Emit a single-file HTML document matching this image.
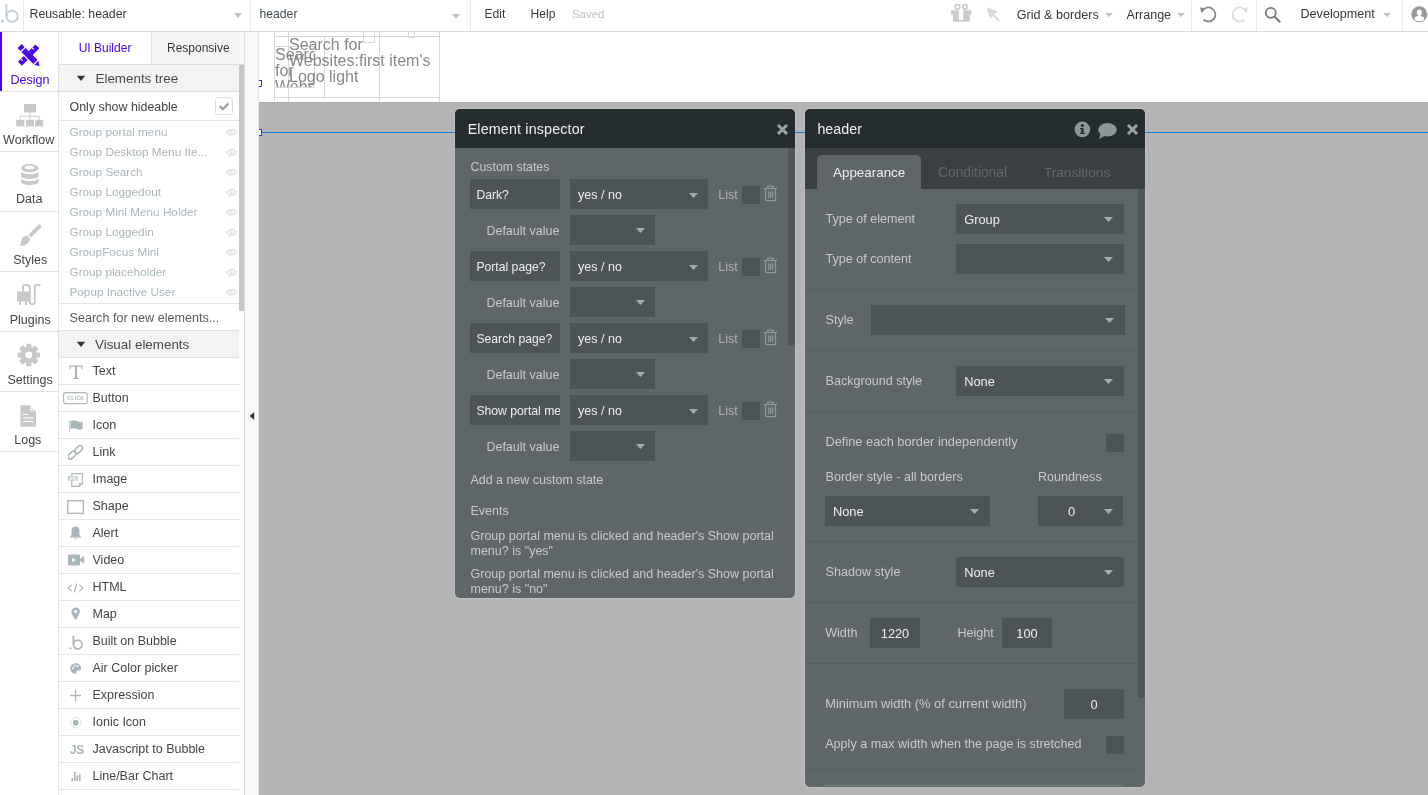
<!DOCTYPE html><html><head><meta charset="utf-8"><style>
html,body{margin:0;padding:0;} body{width:1428px;height:795px;overflow:hidden;position:relative;background:#fff;font-family:"Liberation Sans", sans-serif;}
.t{position:absolute;white-space:nowrap;line-height:20px;} body{-webkit-font-smoothing:antialiased;} #root{position:absolute;left:0;top:0;width:1428px;height:795px;overflow:hidden;will-change:transform;}
.r{position:absolute;display:block;}
</style></head><body><div id="root">
<div class="r" style="left:259px;top:32px;width:1169px;height:763px;background:#b4b4b4;"></div>
<div class="r" style="left:259px;top:32px;width:1169px;height:70px;background:#ffffff;"></div>
<div class="r" style="left:274px;top:32px;width:1px;height:70px;background:#d9d9d9;"></div>
<div class="r" style="left:288px;top:32px;width:1px;height:70px;background:#d9d9d9;"></div>
<div class="r" style="left:324px;top:36px;width:1px;height:61px;background:#d9d9d9;"></div>
<div class="r" style="left:379px;top:32px;width:1px;height:70px;background:#d9d9d9;"></div>
<div class="r" style="left:439px;top:32px;width:1px;height:70px;background:#d9d9d9;"></div>
<div class="r" style="left:259px;top:102px;width:1169px;height:1px;background:#adadad;"></div>
<div class="r" style="left:274px;top:36px;width:166px;height:1px;background:#d9d9d9;"></div>
<div class="r" style="left:274px;top:97px;width:166px;height:1px;background:#d9d9d9;"></div>
<div class="r" style="left:274px;top:46px;width:40px;height:1px;background:#d9d9d9;"></div>
<div class="r" style="left:274px;top:87px;width:40px;height:1px;background:#d9d9d9;"></div>
<div class="r" style="left:314px;top:46px;width:1px;height:41px;background:#d9d9d9;"></div>
<div class="r" style="left:363px;top:32px;width:1px;height:10px;background:#d9d9d9;"></div>
<div class="r" style="left:374px;top:32px;width:1px;height:10px;background:#d9d9d9;"></div>
<div class="r" style="left:363px;top:42px;width:12px;height:1px;background:#d9d9d9;"></div>
<div class="r" style="left:408px;top:32px;width:1px;height:6px;background:#d9d9d9;"></div>
<div class="r" style="left:414px;top:32px;width:1px;height:6px;background:#d9d9d9;"></div>
<div class="r" style="left:408px;top:37px;width:7px;height:1px;background:#d9d9d9;"></div>
<div class="r" style="left:274px;top:46px;width:40px;height:41px;overflow:hidden"><div style="position:absolute;left:1px;top:1px;font-size:16px;line-height:16px;color:#888;width:60px;white-space:normal">Search for Websites:first</div></div>
<div class="t" style="left:289px;top:37px;font-size:16px;line-height:16px;color:#888;white-space:normal;width:150px">Search for<br>Websites:first item's<br>Logo light</div>
<div class="r" style="left:259px;top:132px;width:1169px;height:1px;background:#0a7fe2;"></div>
<div class="r" style="left:259px;top:80px;width:3px;height:7px;background:#fff;border:1px solid #2030ff;border-left:none;box-sizing:border-box"></div>
<div class="r" style="left:259px;top:129px;width:3px;height:7px;background:#fff;border:1px solid #2030ff;border-left:none;box-sizing:border-box"></div>
<div class="r" style="left:0px;top:0px;width:1428px;height:31px;background:#fff;"></div>
<div class="r" style="left:0px;top:31px;width:1428px;height:1px;background:#dadada;"></div>
<svg class="r" style="left:0px;top:0px;" width="22" height="26" viewBox="0 0 22 26"><circle cx="2.6" cy="21.2" r="1.6" fill="#c3ced5"/><path d="M6.4 4.2V16.3" stroke="#c3ced5" stroke-width="1.9" fill="none"/><circle cx="12.1" cy="16.3" r="5.6" stroke="#c3ced5" stroke-width="1.9" fill="none"/></svg>
<div class="r" style="left:23px;top:0px;width:1px;height:31px;background:#e4ebee;"></div>
<div class="t" style="left:29.5px;top:4px;font-size:12.3px;color:#383838;">Reusable: header</div>
<svg class="r" style="left:234px;top:13px;" width="8" height="5" viewBox="0 0 8 5"><path d="M0 0H8L4.0 5Z" fill="#b6c4cb"/></svg>
<div class="r" style="left:250px;top:0px;width:1px;height:31px;background:#e4ebee;"></div>
<div class="t" style="left:259.5px;top:4px;font-size:12.2px;color:#3d4a50;">header</div>
<svg class="r" style="left:452px;top:14px;" width="8" height="5" viewBox="0 0 8 5"><path d="M0 0H8L4.0 5Z" fill="#b6c4cb"/></svg>
<div class="r" style="left:470px;top:0px;width:1px;height:31px;background:#e4ebee;"></div>
<div class="t" style="left:484.5px;top:4px;font-size:12.1px;color:#383838;">Edit</div>
<div class="t" style="left:530.5px;top:4px;font-size:12.1px;color:#383838;">Help</div>
<div class="t" style="left:572px;top:4px;font-size:11.4px;color:#bdbdbd;">Saved</div>
<svg class="r" style="left:950px;top:3px;" width="23" height="20" viewBox="0 0 23 20"><g fill="#c9c9c9"><rect x="1" y="7.3" width="20.4" height="4.4"/><rect x="3" y="11.7" width="16.7" height="7"/></g><g fill="none" stroke="#c9c9c9" stroke-width="1.6"><circle cx="7.5" cy="3.8" r="2.3"/><circle cx="14.8" cy="3.8" r="2.3"/></g><rect x="8.9" y="6.6" width="4.4" height="10.5" fill="#fff"/></svg>
<svg class="r" style="left:985px;top:6px;" width="17" height="17" viewBox="0 0 17 17"><path d="M1.6 1.3L12.8 5.5 9.4 8.4 14.9 13.9 13.4 15.4 7.9 9.9 5 13Z" fill="#dadada"/></svg>
<div class="t" style="left:1016.8px;top:5px;font-size:12.6px;color:#383838;">Grid &amp; borders</div>
<svg class="r" style="left:1105px;top:13px;" width="8" height="4" viewBox="0 0 8 4"><path d="M0 0H8L4.0 4Z" fill="#b6c4cb"/></svg>
<div class="t" style="left:1126.6px;top:5px;font-size:12.5px;color:#383838;">Arrange</div>
<svg class="r" style="left:1177px;top:13px;" width="8" height="4" viewBox="0 0 8 4"><path d="M0 0H8L4.0 4Z" fill="#b6c4cb"/></svg>
<div class="r" style="left:1191px;top:0px;width:1px;height:31px;background:#e4ebee;"></div>
<svg class="r" style="left:1199px;top:5px;" width="18" height="18" viewBox="0 0 18 18"><path d="M3.2 6.2A7 7 0 1 1 4.5 14.5" fill="none" stroke="#8a8a8a" stroke-width="1.8"/><path d="M1 2.2L6.4 3.6 2.5 8.2Z" fill="#8a8a8a"/></svg>
<svg class="r" style="left:1231px;top:5px;" width="18" height="18" viewBox="0 0 18 18"><path d="M14.8 6.2A7 7 0 1 0 13.5 14.5" fill="none" stroke="#dedede" stroke-width="1.8"/><path d="M17 2.2L11.6 3.6 15.5 8.2Z" fill="#dedede"/></svg>
<div class="r" style="left:1256px;top:0px;width:1px;height:31px;background:#e4ebee;"></div>
<svg class="r" style="left:1264px;top:6px;" width="18" height="18" viewBox="0 0 18 18"><circle cx="6.8" cy="6.8" r="5" fill="none" stroke="#7a7a7a" stroke-width="1.8"/><path d="M10.5 10.5L16.2 16.2" stroke="#7a7a7a" stroke-width="2"/></svg>
<div class="t" style="left:1300.5px;top:4px;font-size:12.6px;color:#383838;">Development</div>
<svg class="r" style="left:1382.5px;top:13px;" width="8" height="4" viewBox="0 0 8 4"><path d="M0 0H8L4.0 4Z" fill="#b6c4cb"/></svg>
<div class="r" style="left:1402px;top:0px;width:1px;height:31px;background:#e4ebee;"></div>
<svg class="r" style="left:1410px;top:5px;" width="18" height="19" viewBox="0 0 18 19"><circle cx="9.3" cy="9.3" r="8" fill="#999"/><ellipse cx="9.3" cy="7.4" rx="2.5" ry="2.9" fill="#fff"/><rect x="8.1" y="9" width="2.4" height="3.5" fill="#fff"/><ellipse cx="9.3" cy="13.6" rx="4.8" ry="2.6" fill="#fff"/></svg>
<div class="r" style="left:0px;top:32px;width:58px;height:763px;background:#fff;"></div>
<div class="r" style="left:58px;top:32px;width:1px;height:763px;background:#e2e2e2;"></div>
<div class="r" style="left:0px;top:91px;width:58px;height:1px;background:#e2e2e2;"></div>
<div class="r" style="left:0px;top:151px;width:58px;height:1px;background:#e2e2e2;"></div>
<div class="r" style="left:0px;top:211px;width:58px;height:1px;background:#e2e2e2;"></div>
<div class="r" style="left:0px;top:271px;width:58px;height:1px;background:#e2e2e2;"></div>
<div class="r" style="left:0px;top:331px;width:58px;height:1px;background:#e2e2e2;"></div>
<div class="r" style="left:0px;top:391px;width:58px;height:1px;background:#e2e2e2;"></div>
<div class="r" style="left:0px;top:451px;width:58px;height:1px;background:#e2e2e2;"></div>
<div class="r" style="left:0px;top:32px;width:2px;height:59px;background:#4a0ae6;"></div>
<svg class="r" style="left:16px;top:42px;" width="26" height="26" viewBox="0 0 26 26"><g transform="translate(12.6 13) rotate(45)" fill="#4a0ae6"><rect x="-2.7" y="-12.3" width="5.6" height="10" rx="0.7"/><rect x="-2.7" y="4.1" width="5.6" height="8.3" rx="0.7"/><rect x="-12.7" y="-2.8" width="4.3" height="5.8" rx="0.8"/><rect x="-7.3" y="-2.8" width="17" height="5.8" rx="0.4"/><path d="M11.1 -2.8L15.5 0.1 11.1 3Z"/><g stroke="#fff" stroke-width="1.1"><path d="M-2.8 -7.6H-0.3"/><path d="M-2.8 8.2H-0.3"/></g></g></svg>
<div class="t" style="left:-10px;width:80px;text-align:center;top:70px;font-size:12.6px;color:#4a0ae6">Design</div>
<svg class="r" style="left:16px;top:104px;" width="28" height="23" viewBox="0 0 28 23"><g fill="#c8c8c8"><rect x="8" y="0" width="12" height="8.5"/><rect x="0.3" y="15.8" width="8" height="6.5"/><rect x="10" y="15.8" width="8" height="6.5"/><rect x="19.2" y="15.8" width="8" height="6.5"/></g><path d="M14 8.5V15.8M4.3 15.8V12.2H23.2V15.8" stroke="#c8c8c8" stroke-width="0.9" fill="none"/></svg>
<div class="t" style="left:-11.3px;width:80px;text-align:center;top:130px;font-size:12.5px;color:#444">Workflow</div>
<svg class="r" style="left:20px;top:163px;" width="20" height="23" viewBox="0 0 20 23"><g fill="#c8c8c8"><ellipse cx="9.8" cy="5.2" rx="8.7" ry="4.1"/><path d="M1.1 8.6C3 12 16.6 12 18.5 8.6V13.5C16.6 16.8 3 16.8 1.1 13.5Z"/><path d="M1.1 15.6C3 19 16.6 19 18.5 15.6V19.5C16.6 22.8 3 22.8 1.1 19.5Z"/></g><ellipse cx="9.8" cy="4.4" rx="5" ry="1.9" fill="#fff"/></svg>
<div class="t" style="left:-10.8px;width:80px;text-align:center;top:189px;font-size:12.5px;color:#444">Data</div>
<svg class="r" style="left:18px;top:223px;" width="25" height="24" viewBox="0 0 25 24"><path d="M22.8 2.3C23.8 3.2 23.5 4 22.6 5L13 14.5 10.3 11.8 19.8 2.2C20.8 1.3 21.8 1.3 22.8 2.3Z" fill="#c8c8c8"/><path d="M9.3 12.8L12 15.5C11.5 19.5 8.5 22.8 1.5 22.8 3.5 21 2.5 18.5 4 15.5 5.2 13.3 7.2 12.6 9.3 12.8Z" fill="#c8c8c8"/></svg>
<div class="t" style="left:-9.8px;width:80px;text-align:center;top:250px;font-size:12.5px;color:#444">Styles</div>
<svg class="r" style="left:16px;top:283px;" width="26" height="23" viewBox="0 0 26 23"><g fill="#c8c8c8"><rect x="1" y="8.5" width="12" height="10" rx="0.5"/><rect x="3" y="18.5" width="2" height="3.5"/><rect x="9" y="18.5" width="2" height="3.5"/><path d="M6 8.5V4C6 1.5 8 1 9 1H11V3H9C8.3 3 8 3.4 8 4V8.5Z"/></g><path d="M11 2C12.8 2 13.8 3 13.8 5V18.5C13.8 20.3 15 21.3 16.3 21.3 17.6 21.3 18.8 20.3 18.8 18.5V4C18.8 2.5 19.8 2 21 2H24.5" fill="none" stroke="#c8c8c8" stroke-width="1.9"/></svg>
<div class="t" style="left:-9.8px;width:80px;text-align:center;top:310px;font-size:12.5px;color:#444">Plugins</div>
<svg class="r" style="left:17px;top:343px;" width="24" height="24" viewBox="0 0 24 24"><g fill="#c8c8c8" transform="translate(11.8 12)"><circle r="8.2"/><rect x="-2.6" y="-11.2" width="5.2" height="5" rx="1" transform="rotate(0)"/><rect x="-2.6" y="-11.2" width="5.2" height="5" rx="1" transform="rotate(45)"/><rect x="-2.6" y="-11.2" width="5.2" height="5" rx="1" transform="rotate(90)"/><rect x="-2.6" y="-11.2" width="5.2" height="5" rx="1" transform="rotate(135)"/><rect x="-2.6" y="-11.2" width="5.2" height="5" rx="1" transform="rotate(180)"/><rect x="-2.6" y="-11.2" width="5.2" height="5" rx="1" transform="rotate(225)"/><rect x="-2.6" y="-11.2" width="5.2" height="5" rx="1" transform="rotate(270)"/><rect x="-2.6" y="-11.2" width="5.2" height="5" rx="1" transform="rotate(315)"/></g><circle cx="11.8" cy="12" r="3.4" fill="#fff"/></svg>
<div class="t" style="left:-9.899999999999999px;width:80px;text-align:center;top:370px;font-size:12.5px;color:#444">Settings</div>
<svg class="r" style="left:19px;top:404px;" width="18" height="24" viewBox="0 0 18 24"><path d="M1.5 1.2H11L17 7.2V21.5C17 22.3 16.5 22.8 15.7 22.8H2.8C2 22.8 1.5 22.3 1.5 21.5Z" fill="#c8c8c8"/><path d="M11 1.2V7.2H17" fill="#fff" opacity="0.6"/><g stroke="#fff" stroke-width="1.1"><path d="M4 10.5H9"/><path d="M4 14H14.5"/><path d="M4 17.5H14.5"/></g></svg>
<div class="t" style="left:-12.2px;width:80px;text-align:center;top:430px;font-size:12.5px;color:#444">Logs</div>
<div class="r" style="left:59px;top:32px;width:185px;height:763px;background:#fff;"></div>
<div class="r" style="left:244px;top:32px;width:1px;height:763px;background:#dedede;"></div>
<div class="r" style="left:245px;top:32px;width:13px;height:763px;background:#f8f8f8;"></div>
<div class="r" style="left:258px;top:32px;width:1px;height:763px;background:#e4e4e4;"></div>
<svg class="r" style="left:249px;top:411px;" width="6" height="10" viewBox="0 0 6 10"><path d="M5.2 1V9L0.6 5Z" fill="#333"/></svg>
<div class="r" style="left:151px;top:32px;width:93px;height:32px;background:#f5f5f5;"></div>
<div class="r" style="left:151px;top:32px;width:1px;height:32px;background:#e2e2e2;"></div>
<div class="r" style="left:59px;top:64px;width:185px;height:1px;background:#dcdcdc;"></div>
<div class="t" style="left:78.7px;top:38px;font-size:12px;color:#4a0ae6;">UI Builder</div>
<div class="t" style="left:167px;top:38px;font-size:12px;color:#383838;">Responsive</div>
<div class="r" style="left:59px;top:65px;width:180px;height:26px;background:#f3f3f3;"></div>
<div class="r" style="left:59px;top:91px;width:180px;height:1px;background:#dedede;"></div>
<svg class="r" style="left:76px;top:75px;" width="10" height="7" viewBox="0 0 10 7"><path d="M0.8 0.8H9.2L5 6Z" fill="#333"/></svg>
<div class="t" style="left:95.5px;top:69px;font-size:13.4px;color:#484848;">Elements tree</div>
<div class="r" style="left:239px;top:65px;width:5px;height:246px;background:#c6c6c6;"></div>
<div class="t" style="left:69.6px;top:97px;font-size:12.4px;color:#444;">Only show hideable</div>
<div class="r" style="left:215px;top:97px;width:18px;height:18px;box-sizing:border-box;border:1px solid #dedede;border-radius:3px;background:#fff"></div>
<svg class="r" style="left:218px;top:101px;" width="13" height="11" viewBox="0 0 13 11"><path d="M1.7 5.2L4.8 8.2 10.4 2.5" fill="none" stroke="#98a4a8" stroke-width="2.3"/></svg>
<div class="r" style="left:59px;top:120px;width:180px;height:1px;background:#e6e6e6;"></div>
<div class="t" style="left:69.5px;top:122px;font-size:11.75px;color:#a9b6bb;">Group portal menu</div>
<svg class="r" style="left:226px;top:127px;" width="11" height="11" viewBox="0 0 11 11"><path d="M0.4 5.4Q5.5 -0.6 10.6 5.4Q5.5 11.4 0.4 5.4Z" fill="none" stroke="#d6dbdd" stroke-width="1.1"/><circle cx="5.5" cy="5.3" r="1.9" fill="#dfe3e4"/><path d="M3.6 9.4L7.6 1.2" stroke="#fff" stroke-width="1.6"/><path d="M3.3 9.6L7.3 1.3" stroke="#d6dbdd" stroke-width="1"/></svg>
<div class="t" style="left:69.5px;top:142px;font-size:11.75px;color:#a9b6bb;">Group Desktop Menu Ite...</div>
<svg class="r" style="left:226px;top:147px;" width="11" height="11" viewBox="0 0 11 11"><path d="M0.4 5.4Q5.5 -0.6 10.6 5.4Q5.5 11.4 0.4 5.4Z" fill="none" stroke="#d6dbdd" stroke-width="1.1"/><circle cx="5.5" cy="5.3" r="1.9" fill="#dfe3e4"/><path d="M3.6 9.4L7.6 1.2" stroke="#fff" stroke-width="1.6"/><path d="M3.3 9.6L7.3 1.3" stroke="#d6dbdd" stroke-width="1"/></svg>
<div class="t" style="left:69.5px;top:162px;font-size:11.75px;color:#a9b6bb;">Group Search</div>
<svg class="r" style="left:226px;top:167px;" width="11" height="11" viewBox="0 0 11 11"><path d="M0.4 5.4Q5.5 -0.6 10.6 5.4Q5.5 11.4 0.4 5.4Z" fill="none" stroke="#d6dbdd" stroke-width="1.1"/><circle cx="5.5" cy="5.3" r="1.9" fill="#dfe3e4"/><path d="M3.6 9.4L7.6 1.2" stroke="#fff" stroke-width="1.6"/><path d="M3.3 9.6L7.3 1.3" stroke="#d6dbdd" stroke-width="1"/></svg>
<div class="t" style="left:69.5px;top:182px;font-size:11.75px;color:#a9b6bb;">Group Loggedout</div>
<svg class="r" style="left:226px;top:187px;" width="11" height="11" viewBox="0 0 11 11"><path d="M0.4 5.4Q5.5 -0.6 10.6 5.4Q5.5 11.4 0.4 5.4Z" fill="none" stroke="#d6dbdd" stroke-width="1.1"/><circle cx="5.5" cy="5.3" r="1.9" fill="#dfe3e4"/><path d="M3.6 9.4L7.6 1.2" stroke="#fff" stroke-width="1.6"/><path d="M3.3 9.6L7.3 1.3" stroke="#d6dbdd" stroke-width="1"/></svg>
<div class="t" style="left:69.5px;top:202px;font-size:11.75px;color:#a9b6bb;">Group Mini Menu Holder</div>
<svg class="r" style="left:226px;top:207px;" width="11" height="11" viewBox="0 0 11 11"><path d="M0.4 5.4Q5.5 -0.6 10.6 5.4Q5.5 11.4 0.4 5.4Z" fill="none" stroke="#d6dbdd" stroke-width="1.1"/><circle cx="5.5" cy="5.3" r="1.9" fill="#dfe3e4"/><path d="M3.6 9.4L7.6 1.2" stroke="#fff" stroke-width="1.6"/><path d="M3.3 9.6L7.3 1.3" stroke="#d6dbdd" stroke-width="1"/></svg>
<div class="t" style="left:69.5px;top:222px;font-size:11.75px;color:#a9b6bb;">Group Loggedin</div>
<svg class="r" style="left:226px;top:227px;" width="11" height="11" viewBox="0 0 11 11"><path d="M0.4 5.4Q5.5 -0.6 10.6 5.4Q5.5 11.4 0.4 5.4Z" fill="none" stroke="#d6dbdd" stroke-width="1.1"/><circle cx="5.5" cy="5.3" r="1.9" fill="#dfe3e4"/><path d="M3.6 9.4L7.6 1.2" stroke="#fff" stroke-width="1.6"/><path d="M3.3 9.6L7.3 1.3" stroke="#d6dbdd" stroke-width="1"/></svg>
<div class="t" style="left:69.5px;top:242px;font-size:11.75px;color:#a9b6bb;">GroupFocus Mini</div>
<svg class="r" style="left:226px;top:247px;" width="11" height="11" viewBox="0 0 11 11"><path d="M0.4 5.4Q5.5 -0.6 10.6 5.4Q5.5 11.4 0.4 5.4Z" fill="none" stroke="#d6dbdd" stroke-width="1.1"/><circle cx="5.5" cy="5.3" r="1.9" fill="#dfe3e4"/><path d="M3.6 9.4L7.6 1.2" stroke="#fff" stroke-width="1.6"/><path d="M3.3 9.6L7.3 1.3" stroke="#d6dbdd" stroke-width="1"/></svg>
<div class="t" style="left:69.5px;top:262px;font-size:11.75px;color:#a9b6bb;">Group placeholder</div>
<svg class="r" style="left:226px;top:267px;" width="11" height="11" viewBox="0 0 11 11"><path d="M0.4 5.4Q5.5 -0.6 10.6 5.4Q5.5 11.4 0.4 5.4Z" fill="none" stroke="#d6dbdd" stroke-width="1.1"/><circle cx="5.5" cy="5.3" r="1.9" fill="#dfe3e4"/><path d="M3.6 9.4L7.6 1.2" stroke="#fff" stroke-width="1.6"/><path d="M3.3 9.6L7.3 1.3" stroke="#d6dbdd" stroke-width="1"/></svg>
<div class="t" style="left:69.5px;top:282px;font-size:11.75px;color:#a9b6bb;">Popup Inactive User</div>
<svg class="r" style="left:226px;top:287px;" width="11" height="11" viewBox="0 0 11 11"><path d="M0.4 5.4Q5.5 -0.6 10.6 5.4Q5.5 11.4 0.4 5.4Z" fill="none" stroke="#d6dbdd" stroke-width="1.1"/><circle cx="5.5" cy="5.3" r="1.9" fill="#dfe3e4"/><path d="M3.6 9.4L7.6 1.2" stroke="#fff" stroke-width="1.6"/><path d="M3.3 9.6L7.3 1.3" stroke="#d6dbdd" stroke-width="1"/></svg>
<div class="r" style="left:59px;top:303px;width:180px;height:1px;background:#e6e6e6;"></div>
<div class="t" style="left:69.5px;top:308px;font-size:12.6px;color:#5a5a5a;">Search for new elements...</div>
<div class="r" style="left:59px;top:330px;width:180px;height:1px;background:#e2e2e2;"></div>
<div class="r" style="left:59px;top:331px;width:180px;height:26px;background:#f3f3f3;"></div>
<svg class="r" style="left:76px;top:341px;" width="10" height="7" viewBox="0 0 10 7"><path d="M0.8 0.8H9.2L5 6Z" fill="#333"/></svg>
<div class="t" style="left:95px;top:335px;font-size:13.4px;color:#484848;">Visual elements</div>
<div class="r" style="left:59px;top:357px;width:180px;height:1px;background:#e2e2e2;"></div>
<div class="t" style="left:92.5px;top:361px;font-size:12.5px;color:#444;">Text</div>
<svg class="r" style="left:69px;top:365px;" width="14" height="15" viewBox="0 0 14 15"><path d="M0.5 0.5H13.5V4.2H12.6L12 1.8H8.1V12.6L9.8 13.1V14H4.2V13.1L5.9 12.6V1.8H2L1.4 4.2H0.5Z" fill="#a9b6ba"/></svg>
<div class="r" style="left:59px;top:384px;width:180px;height:1px;background:#e6e6e6;"></div>
<div class="t" style="left:92.5px;top:388px;font-size:12.5px;color:#444;">Button</div>
<svg class="r" style="left:63px;top:391.5px;" width="26" height="13" viewBox="0 0 26 13"><rect x="0.6" y="0.6" width="23.6" height="11" rx="2.2" fill="none" stroke="#a9b6ba" stroke-width="1.1"/><text x="4.3" y="8.2" font-family="Liberation Sans" font-weight="bold" font-size="5" fill="#a9b6ba" letter-spacing="0.35">CLICK</text></svg>
<div class="r" style="left:59px;top:411px;width:180px;height:1px;background:#e6e6e6;"></div>
<div class="t" style="left:92.5px;top:415px;font-size:12.5px;color:#444;">Icon</div>
<svg class="r" style="left:69px;top:420px;" width="15" height="13" viewBox="0 0 15 13"><rect x="0" y="0" width="1.2" height="12" fill="#c8d0d3"/><path d="M1.5 1.2C4 0 6 0.2 8 1.2S12 2.2 13.5 1.2V9C12 10 10 10 8 9S4 8 1.5 9Z" fill="#a9b6ba"/></svg>
<div class="r" style="left:59px;top:438px;width:180px;height:1px;background:#e6e6e6;"></div>
<div class="t" style="left:92.5px;top:442px;font-size:12.5px;color:#444;">Link</div>
<svg class="r" style="left:68px;top:445px;" width="16" height="16" viewBox="0 0 16 16"><g fill="none" stroke="#a9b6ba" stroke-width="1.5"><rect x="-0.6" y="7.6" width="9.2" height="5" rx="2.5" transform="rotate(-45 4 10.1)"/><rect x="5.9" y="2.1" width="9.2" height="5" rx="2.5" transform="rotate(-45 10.5 4.6)"/></g></svg>
<div class="r" style="left:59px;top:465px;width:180px;height:1px;background:#e6e6e6;"></div>
<div class="t" style="left:92.5px;top:469px;font-size:12.5px;color:#444;">Image</div>
<svg class="r" style="left:68px;top:473px;" width="16" height="15" viewBox="0 0 16 15"><path d="M3.8 0.6H14.4V10.4L11.4 13.4H3.8Z" fill="#fff" stroke="#a9b6ba" stroke-width="1.1"/><path d="M14.4 10.4H11.4V13.4" fill="none" stroke="#a9b6ba" stroke-width="1"/><rect x="0" y="3.2" width="9.6" height="4.4" fill="#c3ccd0"/><text x="0.9" y="6.8" font-family="Liberation Sans" font-weight="bold" font-size="3.6" fill="#fff">JPG</text></svg>
<div class="r" style="left:59px;top:492px;width:180px;height:1px;background:#e6e6e6;"></div>
<div class="t" style="left:92.5px;top:496px;font-size:12.5px;color:#444;">Shape</div>
<svg class="r" style="left:67px;top:500px;" width="18" height="15" viewBox="0 0 18 15"><rect x="0.7" y="0.7" width="15.6" height="12.6" fill="none" stroke="#a9b6ba" stroke-width="1.3"/></svg>
<div class="r" style="left:59px;top:519px;width:180px;height:1px;background:#e6e6e6;"></div>
<div class="t" style="left:92.5px;top:523px;font-size:12.5px;color:#444;">Alert</div>
<svg class="r" style="left:69px;top:526px;" width="13" height="14" viewBox="0 0 13 14"><path d="M6.5 0.5C4 0.5 2.5 2.5 2.5 5V9L0.5 11.5H12.5L10.5 9V5C10.5 2.5 9 0.5 6.5 0.5Z" fill="#a9b6ba"/><path d="M5 12.2H8L6.5 13.6Z" fill="#a9b6ba"/></svg>
<div class="r" style="left:59px;top:546px;width:180px;height:1px;background:#e6e6e6;"></div>
<div class="t" style="left:92.5px;top:550px;font-size:12.5px;color:#444;">Video</div>
<svg class="r" style="left:67.5px;top:554px;" width="17" height="12" viewBox="0 0 17 12"><rect x="0" y="0.5" width="12" height="11" rx="0.8" fill="#a9b6ba"/><path d="M12 5L16.2 2V9.8L12 7Z" fill="#a9b6ba"/><path d="M4.3 3.8L7.6 6 4.3 8.2Z" fill="#fff"/></svg>
<div class="r" style="left:59px;top:573px;width:180px;height:1px;background:#e6e6e6;"></div>
<div class="t" style="left:92.5px;top:577px;font-size:12.5px;color:#444;">HTML</div>
<svg class="r" style="left:67px;top:583px;" width="18" height="10" viewBox="0 0 18 10"><g fill="none" stroke="#a9b6ba" stroke-width="1.1"><path d="M4.8 1.8L1 5 4.8 8.2"/><path d="M12.2 1.8L16 5 12.2 8.2"/><path d="M9.8 0.5L7.2 9.5"/></g></svg>
<div class="r" style="left:59px;top:600px;width:180px;height:1px;background:#e6e6e6;"></div>
<div class="t" style="left:92.5px;top:604px;font-size:12.5px;color:#444;">Map</div>
<svg class="r" style="left:71px;top:607px;" width="10" height="14" viewBox="0 0 10 14"><path d="M4.6 0.5C2.2 0.5 0.4 2.4 0.4 4.6 0.4 7.5 4.6 13.2 4.6 13.2S8.8 7.5 8.8 4.6C8.8 2.4 7 0.5 4.6 0.5Z" fill="#a9b6ba"/><circle cx="4.6" cy="4.5" r="1.6" fill="#fff"/></svg>
<div class="r" style="left:59px;top:627px;width:180px;height:1px;background:#e6e6e6;"></div>
<div class="t" style="left:92.5px;top:631px;font-size:12.5px;color:#444;">Built on Bubble</div>
<svg class="r" style="left:68.5px;top:634.5px;" width="15" height="15" viewBox="0 0 15 15"><circle cx="1.4" cy="13.2" r="1" fill="#a9b6ba"/><path d="M4.4 0.8V9.5" stroke="#a9b6ba" stroke-width="1.7"/><circle cx="8.8" cy="9.5" r="4.3" fill="none" stroke="#a9b6ba" stroke-width="1.7"/></svg>
<div class="r" style="left:59px;top:654px;width:180px;height:1px;background:#e6e6e6;"></div>
<div class="t" style="left:92.5px;top:658px;font-size:12.5px;color:#444;">Air Color picker</div>
<svg class="r" style="left:70px;top:663px;" width="12" height="12" viewBox="0 0 12 12"><path d="M5.8 0.3C2.6 0.3 0.3 2.6 0.3 5.6 0.3 8.7 2.9 10.7 5.5 10.7 6.5 10.7 6.8 10 6.4 9.2 5.9 8.3 6.5 7.5 7.5 7.5H8.9C10.4 7.5 11 6.5 11 5.2 11 2.4 8.7 0.3 5.8 0.3Z" fill="#a9b6ba"/><circle cx="2.9" cy="5.3" r="1" fill="#fff"/><circle cx="4.6" cy="2.8" r="1" fill="#fff"/><circle cx="7.5" cy="2.9" r="1" fill="#fff"/></svg>
<div class="r" style="left:59px;top:681px;width:180px;height:1px;background:#e6e6e6;"></div>
<div class="t" style="left:92.5px;top:685px;font-size:12.5px;color:#444;">Expression</div>
<svg class="r" style="left:70px;top:690px;" width="12" height="12" viewBox="0 0 12 12"><path d="M5.5 0V11M0 5.5H11" stroke="#a9b6ba" stroke-width="1.4"/></svg>
<div class="r" style="left:59px;top:708px;width:180px;height:1px;background:#e6e6e6;"></div>
<div class="t" style="left:92.5px;top:712px;font-size:12.5px;color:#444;">Ionic Icon</div>
<svg class="r" style="left:69.5px;top:717px;" width="12" height="12" viewBox="0 0 12 12"><circle cx="5.7" cy="5.7" r="5.2" fill="none" stroke="#d5dcdf" stroke-width="0.9"/><circle cx="5.7" cy="5.7" r="2.9" fill="#a9b6ba"/></svg>
<div class="r" style="left:59px;top:735px;width:180px;height:1px;background:#e6e6e6;"></div>
<div class="t" style="left:92.5px;top:739px;font-size:12.5px;color:#444;">Javascript to Bubble</div>
<svg class="r" style="left:69.5px;top:744px;" width="18" height="11" viewBox="0 0 18 11"><text x="0" y="9.5" font-family="Liberation Sans" font-weight="bold" font-size="12.6" fill="#a9b6ba" transform="scale(0.95 1)" letter-spacing="-0.3">JS</text></svg>
<div class="r" style="left:59px;top:762px;width:180px;height:1px;background:#e6e6e6;"></div>
<div class="t" style="left:92.5px;top:766px;font-size:12.5px;color:#444;">Line/Bar Chart</div>
<svg class="r" style="left:71px;top:772px;" width="10" height="10" viewBox="0 0 10 10"><g fill="#a9b6ba"><rect x="0.5" y="6" width="1.6" height="3"/><rect x="3" y="0" width="1.6" height="9"/><rect x="5.5" y="3.5" width="1.6" height="5.5"/><rect x="8" y="2.5" width="1.6" height="6.5"/></g></svg>
<div class="r" style="left:59px;top:789px;width:180px;height:1px;background:#e6e6e6;"></div>
<div class="r" style="left:455px;top:109px;width:340px;height:489px;background:#5e6669;border-radius:5px;overflow:hidden;box-shadow:0 0 0 1px rgba(255,255,255,0.10),0 0 3px rgba(255,255,255,0.12)"><div style="position:absolute;left:0;top:0;width:340px;height:39px;background:#262d30"></div></div>
<div class="t" style="left:467.7px;top:119px;font-size:14.3px;color:#f0f0f0;letter-spacing:0.15px">Element inspector</div>
<svg class="r" style="left:776px;top:123px;" width="13" height="13" viewBox="0 0 13 13"><path d="M2 2L11 11M11 2L2 11" stroke="#9aa4a8" stroke-width="3"/></svg>
<div class="r" style="left:788px;top:148px;width:7px;height:197px;background:#50575a;"></div>
<div class="t" style="left:470.5px;top:157px;font-size:12.35px;color:#c6cacc;">Custom states</div>
<div class="r" style="left:470px;top:179px;width:90px;height:30px;background:#4d5457;"></div>
<div class="r" style="left:470px;top:179px;width:90px;height:30px;overflow:hidden"><div class="t" style="left:6.4px;top:6px;font-size:12.2px;color:#eeeeee">Dark?</div></div>
<div class="r" style="left:570px;top:179px;width:138px;height:30px;background:#4d5457;"></div>
<div class="t" style="left:578px;top:185px;font-size:12.6px;color:#eeeeee;">yes / no</div>
<svg class="r" style="left:688.5px;top:192.5px;" width="9" height="5" viewBox="0 0 9 5"><path d="M0 0H9L4.5 5Z" fill="#a5adb0"/></svg>
<div class="t" style="left:718.3px;top:185px;font-size:12.5px;color:#aab1b4;">List</div>
<div class="r" style="left:742px;top:186px;width:18px;height:18px;background:#4d5457;"></div>
<svg class="r" style="left:763px;top:185px;" width="15" height="17" viewBox="0 0 15 17"><g fill="none" stroke="#8d979b" stroke-width="1.3"><path d="M0.8 3.5H14.2"/><path d="M4.8 3.3V1.2H10.2V3.3"/><path d="M2.5 4V14.5C2.5 15.2 3 15.6 3.6 15.6H11.4C12 15.6 12.5 15.2 12.5 14.5V4"/><path d="M5.5 6.5V13M7.5 6.5V13M9.5 6.5V13"/></g></svg>
<div class="t" style="left:440px;width:119.4px;text-align:right;top:221px;font-size:12.5px;color:#c6cacc">Default value</div>
<div class="r" style="left:570px;top:215px;width:85px;height:30px;background:#4d5457;"></div>
<svg class="r" style="left:635.5px;top:228px;" width="9" height="5" viewBox="0 0 9 5"><path d="M0 0H9L4.5 5Z" fill="#a5adb0"/></svg>
<div class="r" style="left:470px;top:251px;width:90px;height:30px;background:#4d5457;"></div>
<div class="r" style="left:470px;top:251px;width:90px;height:30px;overflow:hidden"><div class="t" style="left:6.4px;top:6px;font-size:12.2px;color:#eeeeee">Portal page?</div></div>
<div class="r" style="left:570px;top:251px;width:138px;height:30px;background:#4d5457;"></div>
<div class="t" style="left:578px;top:257px;font-size:12.6px;color:#eeeeee;">yes / no</div>
<svg class="r" style="left:688.5px;top:264.5px;" width="9" height="5" viewBox="0 0 9 5"><path d="M0 0H9L4.5 5Z" fill="#a5adb0"/></svg>
<div class="t" style="left:718.3px;top:257px;font-size:12.5px;color:#aab1b4;">List</div>
<div class="r" style="left:742px;top:258px;width:18px;height:18px;background:#4d5457;"></div>
<svg class="r" style="left:763px;top:257px;" width="15" height="17" viewBox="0 0 15 17"><g fill="none" stroke="#8d979b" stroke-width="1.3"><path d="M0.8 3.5H14.2"/><path d="M4.8 3.3V1.2H10.2V3.3"/><path d="M2.5 4V14.5C2.5 15.2 3 15.6 3.6 15.6H11.4C12 15.6 12.5 15.2 12.5 14.5V4"/><path d="M5.5 6.5V13M7.5 6.5V13M9.5 6.5V13"/></g></svg>
<div class="t" style="left:440px;width:119.4px;text-align:right;top:293px;font-size:12.5px;color:#c6cacc">Default value</div>
<div class="r" style="left:570px;top:287px;width:85px;height:30px;background:#4d5457;"></div>
<svg class="r" style="left:635.5px;top:300px;" width="9" height="5" viewBox="0 0 9 5"><path d="M0 0H9L4.5 5Z" fill="#a5adb0"/></svg>
<div class="r" style="left:470px;top:323px;width:90px;height:30px;background:#4d5457;"></div>
<div class="r" style="left:470px;top:323px;width:90px;height:30px;overflow:hidden"><div class="t" style="left:6.4px;top:6px;font-size:12.2px;color:#eeeeee">Search page?</div></div>
<div class="r" style="left:570px;top:323px;width:138px;height:30px;background:#4d5457;"></div>
<div class="t" style="left:578px;top:329px;font-size:12.6px;color:#eeeeee;">yes / no</div>
<svg class="r" style="left:688.5px;top:336.5px;" width="9" height="5" viewBox="0 0 9 5"><path d="M0 0H9L4.5 5Z" fill="#a5adb0"/></svg>
<div class="t" style="left:718.3px;top:329px;font-size:12.5px;color:#aab1b4;">List</div>
<div class="r" style="left:742px;top:330px;width:18px;height:18px;background:#4d5457;"></div>
<svg class="r" style="left:763px;top:329px;" width="15" height="17" viewBox="0 0 15 17"><g fill="none" stroke="#8d979b" stroke-width="1.3"><path d="M0.8 3.5H14.2"/><path d="M4.8 3.3V1.2H10.2V3.3"/><path d="M2.5 4V14.5C2.5 15.2 3 15.6 3.6 15.6H11.4C12 15.6 12.5 15.2 12.5 14.5V4"/><path d="M5.5 6.5V13M7.5 6.5V13M9.5 6.5V13"/></g></svg>
<div class="t" style="left:440px;width:119.4px;text-align:right;top:365px;font-size:12.5px;color:#c6cacc">Default value</div>
<div class="r" style="left:570px;top:359px;width:85px;height:30px;background:#4d5457;"></div>
<svg class="r" style="left:635.5px;top:372px;" width="9" height="5" viewBox="0 0 9 5"><path d="M0 0H9L4.5 5Z" fill="#a5adb0"/></svg>
<div class="r" style="left:470px;top:395px;width:90px;height:30px;background:#4d5457;"></div>
<div class="r" style="left:470px;top:395px;width:90px;height:30px;overflow:hidden"><div class="t" style="left:6.4px;top:6px;font-size:12.2px;color:#eeeeee">Show portal me</div></div>
<div class="r" style="left:570px;top:395px;width:138px;height:30px;background:#4d5457;"></div>
<div class="t" style="left:578px;top:401px;font-size:12.6px;color:#eeeeee;">yes / no</div>
<svg class="r" style="left:688.5px;top:408.5px;" width="9" height="5" viewBox="0 0 9 5"><path d="M0 0H9L4.5 5Z" fill="#a5adb0"/></svg>
<div class="t" style="left:718.3px;top:401px;font-size:12.5px;color:#aab1b4;">List</div>
<div class="r" style="left:742px;top:402px;width:18px;height:18px;background:#4d5457;"></div>
<svg class="r" style="left:763px;top:401px;" width="15" height="17" viewBox="0 0 15 17"><g fill="none" stroke="#8d979b" stroke-width="1.3"><path d="M0.8 3.5H14.2"/><path d="M4.8 3.3V1.2H10.2V3.3"/><path d="M2.5 4V14.5C2.5 15.2 3 15.6 3.6 15.6H11.4C12 15.6 12.5 15.2 12.5 14.5V4"/><path d="M5.5 6.5V13M7.5 6.5V13M9.5 6.5V13"/></g></svg>
<div class="t" style="left:440px;width:119.4px;text-align:right;top:437px;font-size:12.5px;color:#c6cacc">Default value</div>
<div class="r" style="left:570px;top:431px;width:85px;height:30px;background:#4d5457;"></div>
<svg class="r" style="left:635.5px;top:444px;" width="9" height="5" viewBox="0 0 9 5"><path d="M0 0H9L4.5 5Z" fill="#a5adb0"/></svg>
<div class="t" style="left:470.5px;top:470px;font-size:12.45px;color:#c6cacc;">Add a new custom state</div>
<div class="t" style="left:470.5px;top:501px;font-size:12.5px;color:#c6cacc;">Events</div>
<div class="t" style="left:470.5px;top:526px;font-size:12.5px;color:#c6cacc;">Group portal menu is clicked and header's Show portal</div>
<div class="t" style="left:470.5px;top:541px;font-size:12.5px;color:#c6cacc;">menu? is "yes"</div>
<div class="t" style="left:470.5px;top:564px;font-size:12.5px;color:#c6cacc;">Group portal menu is clicked and header's Show portal</div>
<div class="t" style="left:470.5px;top:579px;font-size:12.5px;color:#c6cacc;">menu? is "no"</div>
<div class="r" style="left:805px;top:109px;width:340px;height:678px;background:#5e6669;border-radius:5px;overflow:hidden;box-shadow:0 0 0 1px rgba(255,255,255,0.10),0 0 3px rgba(255,255,255,0.12)"><div style="position:absolute;left:0;top:0;width:340px;height:39px;background:#262d30"></div></div>
<div class="r" style="left:805px;top:148px;width:340px;height:41px;background:#393f42;"></div>
<div class="r" style="left:817px;top:155px;width:104px;height:34px;background:#5e6669;border-radius:5px 5px 0 0"></div>
<div class="t" style="left:817.4px;top:119px;font-size:14.3px;color:#f0f0f0;">header</div>
<svg class="r" style="left:1074px;top:121px;" width="17" height="17" viewBox="0 0 17 17"><circle cx="8.4" cy="8.4" r="7.8" fill="#8b979b"/><circle cx="8.4" cy="4.5" r="1.5" fill="#262d30"/><path d="M6 7H9.6V11.8H10.8V13H6V11.8H7.2V8.2H6Z" fill="#262d30"/></svg>
<svg class="r" style="left:1097px;top:122px;" width="21" height="18" viewBox="0 0 21 18"><ellipse cx="10.5" cy="7.8" rx="9.3" ry="6.8" fill="#8b979b"/><path d="M3.5 12L2 17 8.5 13.5Z" fill="#8b979b"/></svg>
<svg class="r" style="left:1126px;top:123px;" width="13" height="13" viewBox="0 0 13 13"><path d="M2 2L11 11M11 2L2 11" stroke="#9aa4a8" stroke-width="3"/></svg>
<div class="t" style="left:833px;top:163px;font-size:13.4px;color:#f0f0f0;">Appearance</div>
<div class="t" style="left:938px;top:163px;font-size:13.8px;color:#60676a;">Conditional</div>
<div class="t" style="left:1043.8px;top:163px;font-size:13.7px;color:#60676a;">Transitions</div>
<div class="r" style="left:1138px;top:189px;width:7px;height:509px;background:#50575a;"></div>
<div class="t" style="left:825.5px;top:209px;font-size:12.6px;color:#c6cacc;">Type of element</div>
<div class="r" style="left:956px;top:204px;width:168px;height:30px;background:#4d5457;"></div>
<div class="t" style="left:964.2px;top:209.5px;font-size:12.8px;color:#eeeeee;">Group</div>
<svg class="r" style="left:1104px;top:217px;" width="9" height="5" viewBox="0 0 9 5"><path d="M0 0H9L4.5 5Z" fill="#a5adb0"/></svg>
<div class="t" style="left:825.5px;top:249px;font-size:12.6px;color:#c6cacc;">Type of content</div>
<div class="r" style="left:956px;top:244px;width:168px;height:30px;background:#4d5457;"></div>
<svg class="r" style="left:1104px;top:257px;" width="9" height="5" viewBox="0 0 9 5"><path d="M0 0H9L4.5 5Z" fill="#a5adb0"/></svg>
<div class="r" style="left:805px;top:289px;width:333px;height:1px;background:#555c5f;"></div>
<div class="t" style="left:825.5px;top:310px;font-size:12.6px;color:#c6cacc;">Style</div>
<div class="r" style="left:871px;top:305px;width:254px;height:30px;background:#4d5457;"></div>
<svg class="r" style="left:1105px;top:318px;" width="9" height="5" viewBox="0 0 9 5"><path d="M0 0H9L4.5 5Z" fill="#a5adb0"/></svg>
<div class="r" style="left:805px;top:350px;width:333px;height:1px;background:#555c5f;"></div>
<div class="t" style="left:825.5px;top:371px;font-size:12.6px;color:#c6cacc;">Background style</div>
<div class="r" style="left:956px;top:366px;width:168px;height:30px;background:#4d5457;"></div>
<div class="t" style="left:964.2px;top:371.5px;font-size:12.8px;color:#eeeeee;">None</div>
<svg class="r" style="left:1104px;top:379px;" width="9" height="5" viewBox="0 0 9 5"><path d="M0 0H9L4.5 5Z" fill="#a5adb0"/></svg>
<div class="r" style="left:805px;top:411px;width:333px;height:1px;background:#555c5f;"></div>
<div class="t" style="left:825.5px;top:432px;font-size:12.8px;color:#c6cacc;">Define each border independently</div>
<div class="r" style="left:1106px;top:434px;width:18px;height:18px;background:#4d5457;"></div>
<div class="t" style="left:825.5px;top:467px;font-size:12.6px;color:#c6cacc;">Border style - all borders</div>
<div class="t" style="left:1038px;top:467px;font-size:12.6px;color:#c6cacc;">Roundness</div>
<div class="r" style="left:825px;top:496px;width:165px;height:30px;background:#4d5457;"></div>
<div class="t" style="left:833px;top:501.5px;font-size:12.8px;color:#eeeeee;">None</div>
<svg class="r" style="left:970px;top:509px;" width="9" height="5" viewBox="0 0 9 5"><path d="M0 0H9L4.5 5Z" fill="#a5adb0"/></svg>
<div class="r" style="left:1038px;top:496px;width:85px;height:30px;background:#4d5457;"></div>
<div class="t" style="left:1068px;top:501.5px;font-size:12.8px;color:#eeeeee;">0</div>
<svg class="r" style="left:1103.5px;top:509px;" width="9" height="5" viewBox="0 0 9 5"><path d="M0 0H9L4.5 5Z" fill="#a5adb0"/></svg>
<div class="r" style="left:805px;top:541px;width:333px;height:1px;background:#555c5f;"></div>
<div class="t" style="left:825.5px;top:562px;font-size:12.6px;color:#c6cacc;">Shadow style</div>
<div class="r" style="left:956px;top:557px;width:168px;height:30px;background:#4d5457;"></div>
<div class="t" style="left:964.2px;top:562.5px;font-size:12.8px;color:#eeeeee;">None</div>
<svg class="r" style="left:1104px;top:570px;" width="9" height="5" viewBox="0 0 9 5"><path d="M0 0H9L4.5 5Z" fill="#a5adb0"/></svg>
<div class="r" style="left:805px;top:602px;width:333px;height:1px;background:#555c5f;"></div>
<div class="t" style="left:825.2px;top:622.5px;font-size:12.6px;color:#c6cacc;">Width</div>
<div class="r" style="left:870px;top:618px;width:50px;height:30px;background:#4d5457;"></div>
<div class="t" style="left:870px;width:50px;text-align:center;top:623.5px;font-size:12.8px;color:#eeeeee">1220</div>
<div class="t" style="left:957.4px;top:622.5px;font-size:12.6px;color:#c6cacc;">Height</div>
<div class="r" style="left:1002px;top:618px;width:50px;height:30px;background:#4d5457;"></div>
<div class="t" style="left:1002px;width:50px;text-align:center;top:623.5px;font-size:12.8px;color:#eeeeee">100</div>
<div class="r" style="left:805px;top:663px;width:333px;height:1px;background:#555c5f;"></div>
<div class="t" style="left:825.2px;top:694px;font-size:12.9px;color:#c6cacc;">Minimum width (% of current width)</div>
<div class="r" style="left:1064px;top:689px;width:60px;height:30px;background:#4d5457;"></div>
<div class="t" style="left:1064px;width:60px;text-align:center;top:695px;font-size:12.8px;color:#eeeeee">0</div>
<div class="t" style="left:825.2px;top:734px;font-size:12.6px;color:#c6cacc;">Apply a max width when the page is stretched</div>
<div class="r" style="left:1106px;top:736px;width:18px;height:18px;background:#4d5457;"></div>
<div class="r" style="left:805px;top:769px;width:333px;height:1px;background:#555c5f;"></div>
<div class="r" style="left:825px;top:785px;width:299px;height:1px;background:#737a7d;"></div>
</div></body></html>
